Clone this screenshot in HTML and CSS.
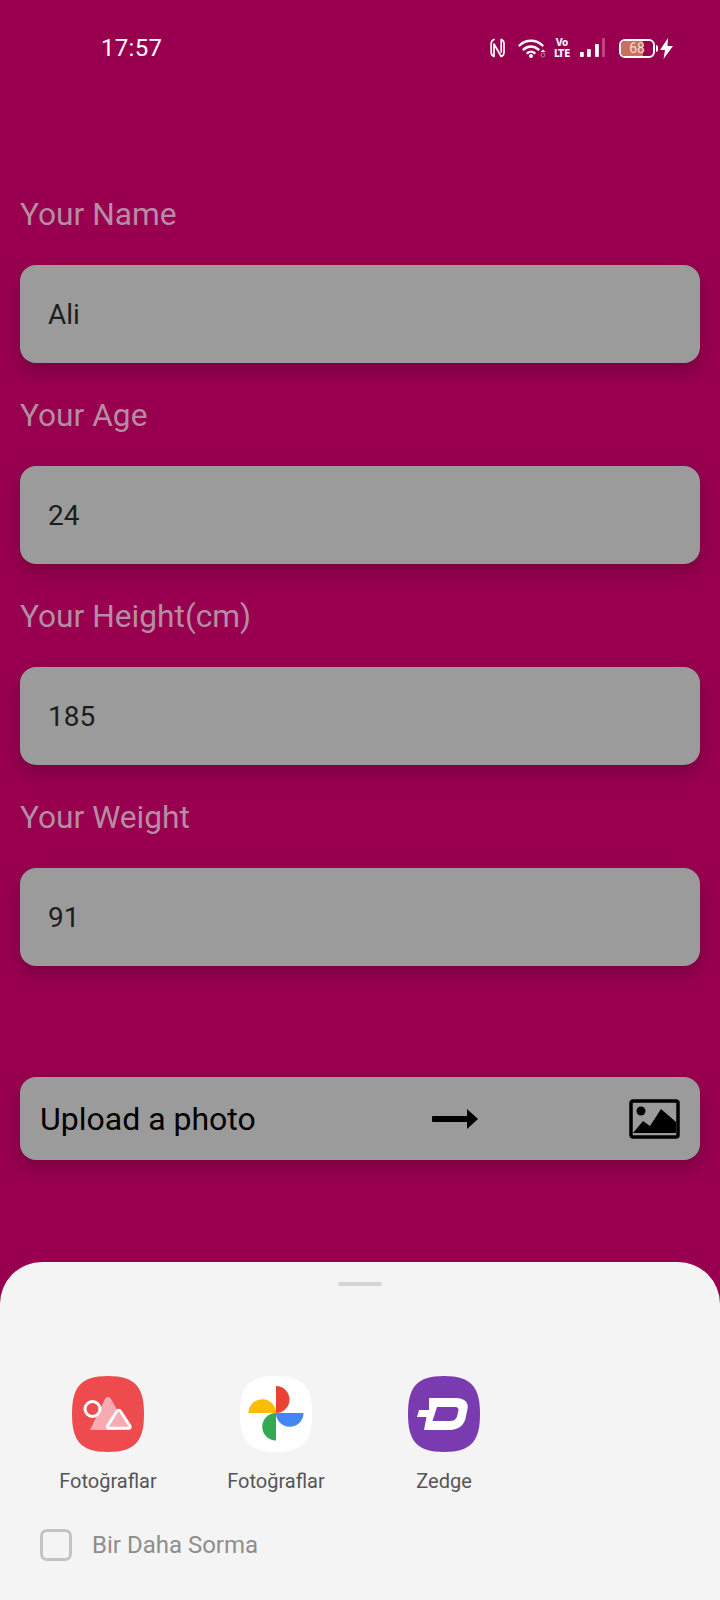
FILE: index.html
```html
<!DOCTYPE html>
<html lang="tr">
<head>
<meta charset="utf-8">
<title>Profile</title>
<link rel="stylesheet" href="styles.css">
</head>
<body>
<div class="screen">
  <header class="status">
    <span class="time">17:57</span>
    <div class="status-icons">
      <svg class="i-nfc" viewBox="0 0 15 20" width="15" height="20"><path d="M4 1.500C2 2.300 1.200 3.500 1.200 5.500v9c0 2 .8 3.200 2.800 4V6l7.200 12.500c2-.8 2.800-2 2.800-4v-9c0-2-.8-3.200-2.800-4V14" fill="none" stroke="#fff" stroke-width="1.700" stroke-linejoin="round" stroke-linecap="round"/></svg>
      <svg class="i-wifi" viewBox="0 0 28 20" width="28" height="20"><g fill="none" stroke="#fff" stroke-width="2.400" stroke-linecap="round"><path d="M1.500 7.500C8 1.200 18 1.200 24.500 7.500"/><path d="M5.500 11.500c4.500-4 10.500-4 15 0"/><path d="M9.500 15c2.300-1.800 4.700-1.800 7 0"/></g><circle cx="13" cy="18" r="2" fill="#fff"/><path d="M22.500 14l2.500-2.500 2.500 2.500z" fill="#fff"/><circle cx="25" cy="17" r="2" fill="none" stroke="#c9799f" stroke-width="1"/></svg>
      <div class="volte"><span>Vo</span><span>LTE</span></div>
      <svg class="i-signal" viewBox="0 0 26 20" width="26" height="20"><rect x="0" y="14" width="3.800" height="5" rx=".8" fill="#fff"/><rect x="7" y="11" width="3.800" height="8" rx=".8" fill="#fff"/><rect x="15" y="6" width="3.800" height="13" rx=".8" fill="#fff"/><rect x="22" y="0" width="3" height="19" rx=".8" fill="#c2447f"/></svg>
      <div class="battery-wrap">
        <div class="battery"><div class="battery-fill"></div><span class="battery-num">68</span></div>
        <div class="battery-cap"></div>
      </div>
      <svg class="i-bolt" viewBox="0 0 13 21" width="13" height="21"><path d="M8 0L0 12h5l-1.500 9L13 8H7.500z" fill="#fff"/></svg>
    </div>
  </header>

  <main class="form">
    <section class="field">
      <div class="label">Your Name</div>
      <div class="input">Ali</div>
    </section>
    <section class="field">
      <div class="label">Your Age</div>
      <div class="input">24</div>
    </section>
    <section class="field">
      <div class="label">Your Height(cm)</div>
      <div class="input">185</div>
    </section>
    <section class="field">
      <div class="label">Your Weight</div>
      <div class="input">91</div>
    </section>
    <div class="upload">
      <span class="upload-text">Upload a photo</span>
      <svg class="arrow" viewBox="0 0 46 20" width="46" height="20"><rect x="0" y="7" width="37" height="6" rx="1" fill="#000"/><path d="M35 0l11 10-11 10z" fill="#000"/></svg>
      <svg class="photo" viewBox="0 0 51 40" width="51" height="40"><rect x="2" y="2" width="47" height="36" rx="2" fill="none" stroke="#000" stroke-width="3.500"/><circle cx="12" cy="12" r="4.500" fill="#000"/><path d="M4 34L14 22l7 5 11-17 15 13v11z" fill="#000"/></svg>
    </div>
  </main>

  <aside class="sheet">
    <div class="handle"></div>
    <div class="apps">
      <div class="app">
        <svg class="app-icon" viewBox="0 0 72 76" width="72" height="76"><path d="M36 0C64 0 72 12 72 38S64 76 36 76 0 64 0 38 8 0 36 0z" fill="#ee4b4f"/><path d="M18 54L33 23c1.500-2.800 4.500-2.800 6 0l9 16-6 15z" fill="#f7aab0"/><path d="M35.500 50L45 35a2 2 0 0 1 3.300 0L58 50a1.500 1.500 0 0 1-1.300 2.300H36.800a1.500 1.500 0 0 1-1.300-2.300z" fill="#f7aab0" stroke="#fff" stroke-width="3"/><circle cx="20.500" cy="33" r="7.500" fill="#ee4b4f" stroke="#fff" stroke-width="3"/></svg>
        <span class="app-name">Fotoğraflar</span>
      </div>
      <div class="app">
        <svg class="app-icon" viewBox="0 0 72 76" width="72" height="76"><path d="M36 0C64 0 72 12 72 38S64 76 36 76 0 64 0 38 8 0 36 0z" fill="#fff"/><path d="M36 37V10a13.500 13.500 0 0 1 0 27z" fill="#ea4335"/><path d="M36 37h27.500a13.750 13.750 0 0 1-27.500 0z" fill="#4285f4"/><path d="M36 37v27.500a13.750 13.750 0 0 1 0-27.500z" fill="#34a853"/><path d="M36 37H8.500a13.750 13.750 0 0 1 27.500 0z" fill="#fbbc04"/></svg>
        <span class="app-name">Fotoğraflar</span>
      </div>
      <div class="app">
        <svg class="app-icon" viewBox="0 0 72 76" width="72" height="76"><path d="M36 0C64 0 72 12 72 38S64 76 36 76 0 64 0 38 8 0 36 0z" fill="#7a3bb0"/><path d="M21 22h27c9 0 13 5 11.500 11l-1.500 7C57 49 50 54 42 54H16l2.500-13H9l2-7h10z" fill="#fff"/><path d="M29 31l-4.500 14H42c3.500 0 6-1.500 7-4.500l1.300-5.500c.7-3-1-4-3.500-4z" fill="#7a3bb0"/></svg>
        <span class="app-name">Zedge</span>
      </div>
    </div>
    <label class="remember">
      <span class="checkbox"></span>
      <span class="remember-text">Bir Daha Sorma</span>
    </label>
  </aside>
</div>
</body>
</html>
```
FILE: styles.css
```css
* { box-sizing: border-box; }
html, body { margin: 0; padding: 0; }
body { font-family: Roboto, "Noto Sans", sans-serif; }

.screen {
  width: 720px;
  height: 1600px;
  background: #98004f;
  display: flex;
  flex-direction: column;
  overflow: hidden;
}

.status {
  height: 96px;
  flex: none;
  display: flex;
  align-items: center;
  justify-content: space-between;
  padding: 0 47px 0 101px;
  color: #fff;
}
.time { font-size: 24px; letter-spacing: .3px; }
.status-icons { display: flex; align-items: center; }
.i-nfc { margin-right: 13px; }
.i-wifi { margin-right: 8px; }
.volte {
  display: flex;
  flex-direction: column;
  font: 700 10px/11px "Liberation Sans Narrow", "DejaVu Sans Condensed", sans-serif;
  width: 16px;
  text-align: center;
  margin-right: 10px;
}
.i-signal { margin-right: 13px; }
.battery-wrap { display: flex; align-items: center; margin-right: 2px; }
.battery {
  position: relative;
  width: 36px;
  height: 19px;
  border: 2px solid #fff;
  border-radius: 6px;
  overflow: hidden;
  display: flex;
  align-items: center;
  justify-content: center;
}
.battery-fill { position: absolute; left: 0; top: 0; bottom: 0; width: 68%; background: #c9705f; }
.battery-num { position: relative; font-size: 14px; color: #f8dcd2; }
.battery-cap { width: 2px; height: 7px; background: #fff; border-radius: 0 2px 2px 0; margin-left: 1px; }

.form {
  flex: 1;
  padding: 93px 20px 0;
  display: flex;
  flex-direction: column;
}
.field { height: 201px; display: flex; flex-direction: column; }
.label {
  height: 76px;
  padding-top: 1px;
  font-size: 31.7px;
  line-height: 50px;
  color: #b58ca4;
}
.input {
  height: 98px;
  flex: none;
  background: #9b9b9b;
  border-radius: 16px;
  box-shadow: 0 8px 16px rgba(70, 0, 40, .35);
  padding: 0 28px;
  display: flex;
  align-items: center;
  font-size: 28px;
  color: #1d1d1d;
}
.upload {
  margin-top: 84px;
  height: 83px;
  flex: none;
  background: #9b9b9b;
  border-radius: 16px;
  box-shadow: 0 8px 16px rgba(70, 0, 40, .35);
  padding: 0 20px;
  display: flex;
  align-items: center;
  color: #000;
}
.upload-text { width: 392px; font-size: 32px; }
.arrow { margin-right: 151px; }

.sheet {
  height: 338px;
  flex: none;
  background: #f4f4f4;
  border-radius: 42px 42px 0 0;
  display: flex;
  flex-direction: column;
  padding-top: 20px;
}
.handle { width: 44px; height: 4px; background: #d4d4d4; border-radius: 2px; align-self: center; }
.apps { display: flex; padding: 90px 0 0 24px; }
.app { width: 168px; display: flex; flex-direction: column; align-items: center; }
.app-name { margin-top: 17px; font-size: 20px; line-height: 24px; color: #555; }
.remember { display: flex; align-items: center; padding: 36px 0 0 40px; }
.checkbox {
  width: 32px;
  height: 32px;
  border: 3px solid #c4c4c4;
  border-radius: 7px;
  margin-right: 20px;
}
.remember-text { font-size: 24px; color: #8e8e8e; }
```
